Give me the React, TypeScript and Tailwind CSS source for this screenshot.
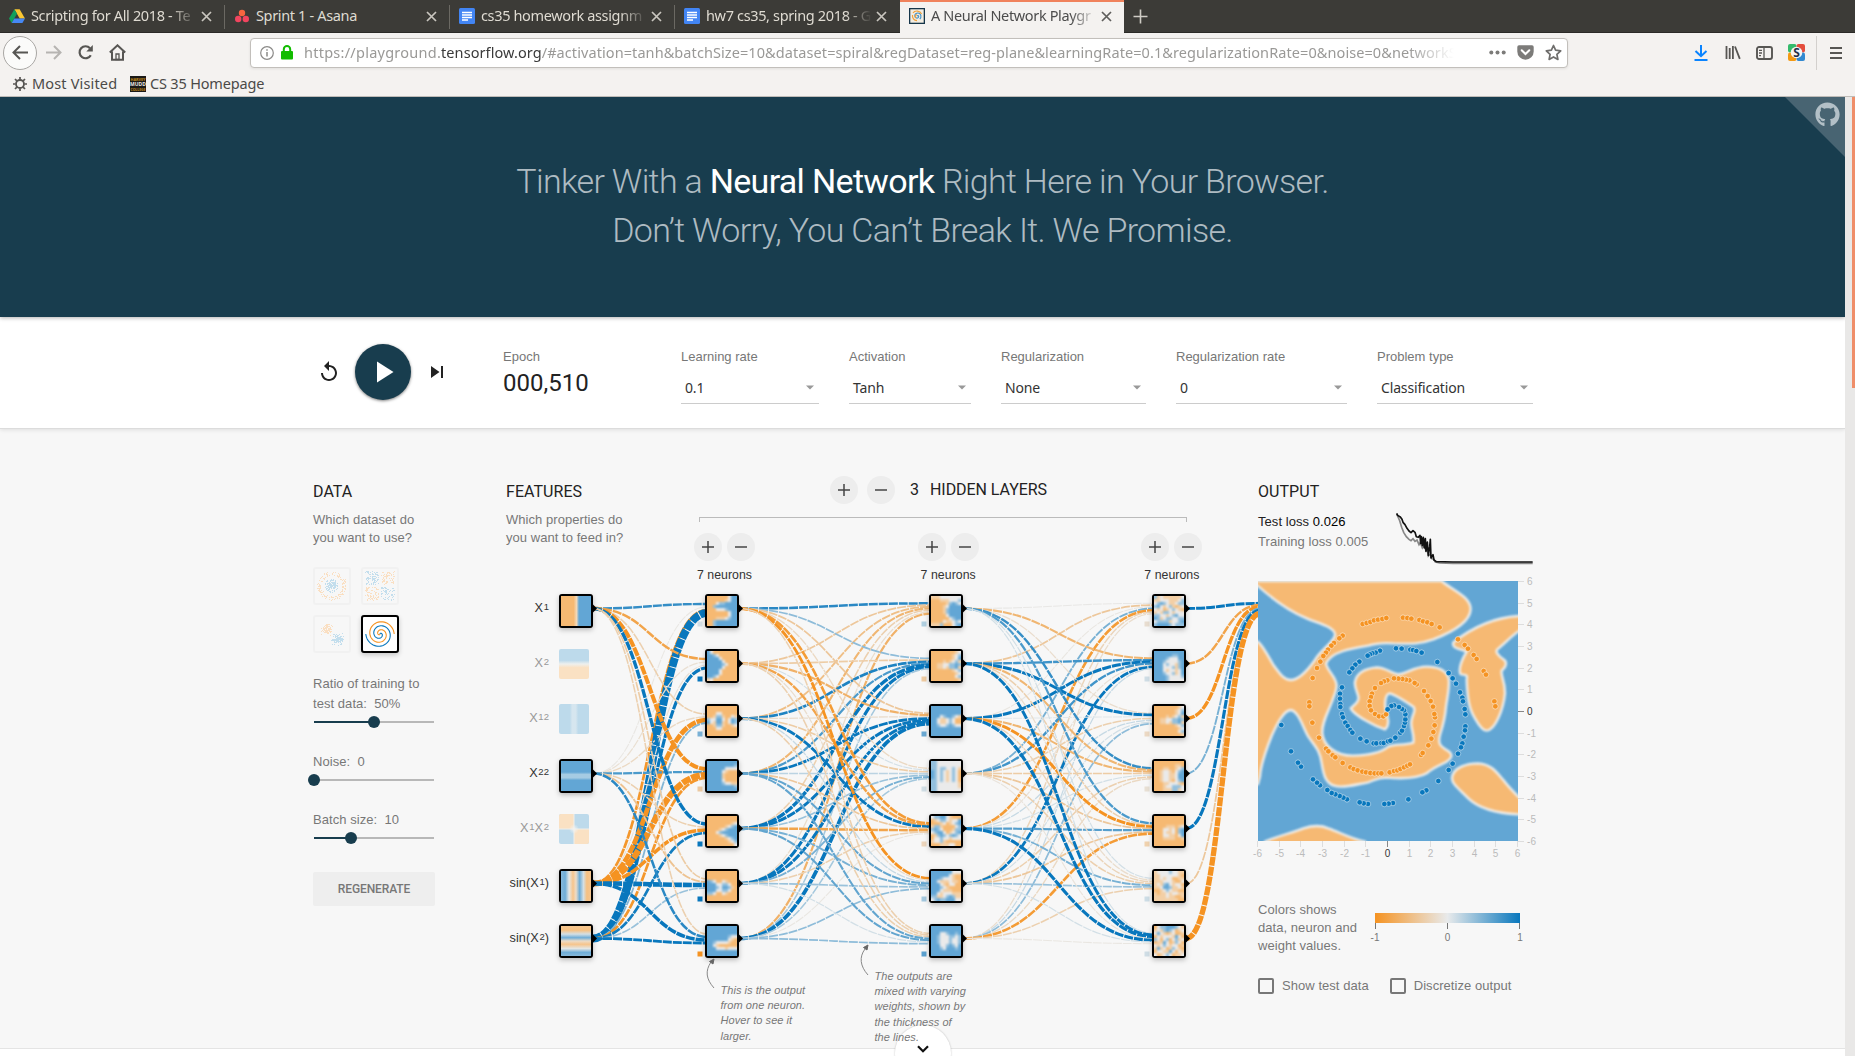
import React from "react";
import { FaGithub } from "react-icons/fa";

const NEG = "#f6b972";
const POS = "#62a6d5";

/* ---------- helpers ---------- */

function mix(a: number[], b: number[], t: number) {
  return `rgb(${a.map((v, i) => Math.round(v + (b[i] - v) * t)).join(",")})`;
}

function weightColor(w: number) {
  const t = Math.min(1, Math.abs(w));
  return mix([232, 234, 235], w < 0 ? [245, 147, 34] : [8, 119, 189], t);
}

function random(seed: number) {
  let s = seed;
  return () => {
    s = (s * 16807) % 2147483647;
    return s / 2147483647;
  };
}

/* ---------- browser chrome ---------- */

const TAB_MASK = "[mask-image:linear-gradient(to_right,black_84%,transparent)]";

function CloseX({ color }: { color: string }) {
  return (
    <svg width="11" height="11" viewBox="0 0 11 11" className="shrink-0">
      <path d="M1 1L10 10M10 1L1 10" stroke={color} strokeWidth="1.7" fill="none" />
    </svg>
  );
}

function DriveIcon() {
  return (
    <svg width="16" height="16" viewBox="0 0 16 16">
      <path d="M5.4 1.2h5.2L16 10.4h-5.3z" fill="#fbc732" />
      <path d="M5.4 1.2L0 10.4l2.7 4.5L8 5.7z" fill="#12a05c" />
      <path d="M5.3 10.4H16l-2.6 4.5H2.7z" fill="#4688f4" />
    </svg>
  );
}

function AsanaIcon() {
  return (
    <svg width="14" height="14" viewBox="0 0 14 14">
      <circle cx="7" cy="4" r="3.2" fill="#f8653f" />
      <circle cx="3.2" cy="10" r="3.2" fill="#f2455f" />
      <circle cx="10.8" cy="10" r="3.2" fill="#f2455f" />
    </svg>
  );
}

function DocsIcon() {
  return (
    <svg width="16" height="16" viewBox="0 0 16 16">
      <rect width="16" height="16" rx="1.5" fill="#4285f4" />
      <path d="M3 4.5h10M3 7h10M3 9.5h10M3 12h6" stroke="#fff" strokeWidth="1.3" />
    </svg>
  );
}

function PlaygroundIcon() {
  return (
    <svg width="16" height="16" viewBox="0 0 16 16">
      <rect x="0.5" y="0.5" width="15" height="15" fill="#f3ede2" stroke="#16364a" strokeWidth="1.6" />
      <path d="M8 8c1-1 2.200 0 1.500 1.300S6 10.500 5.800 8 8 4.500 10 5.200s2.800 4 .8 6" stroke="#3c8fc7" strokeWidth="1.100" fill="none" />
      <path d="M8 7c-1.500-.5-2.500 2-.8 2.600M4 5c2-3 7-2.500 8.600 1M3.500 7c-.5 3 1.500 5.500 4.500 5.600" stroke="#f0a13c" strokeWidth="1.200" fill="none" />
    </svg>
  );
}

const TABS = [
  { title: "Scripting for All 2018 - Te", icon: <DriveIcon />, fade: true },
  { title: "Sprint 1 - Asana", icon: <AsanaIcon />, fade: false },
  { title: "cs35 homework assignm", icon: <DocsIcon />, fade: true },
  { title: "hw7 cs35, spring 2018 - G", icon: <DocsIcon />, fade: true },
];

function TabBar() {
  return (
    <div className="flex h-[33px] items-stretch border-b border-[#2b2a27] bg-[#3c3b37] text-[14.5px] text-[#dfdbd2]">
      {TABS.map((t, i) => (
        <div key={t.title} className="relative flex w-[225px] items-center pl-[9px]">
          <div className="flex w-4 justify-center">{t.icon}</div>
          <div className={`ml-[6px] w-[166px] overflow-hidden whitespace-nowrap tracking-[-0.35px] ${t.fade ? TAB_MASK : ""}`}>
            {t.title}
          </div>
          <div className="ml-[4px]">
            <CloseX color="#c9c6bf" />
          </div>
          {i < 3 && <div className="absolute top-[5px] right-0 h-[24px] w-px bg-[#6b6963]" />}
        </div>
      ))}
      <div className="-mb-px flex w-[224px] items-center border-t-2 border-[#f0825c] bg-[#f4f2f0] pb-[3px] pl-[9px] text-[#4c4c4c]">
        <PlaygroundIcon />
        <div className={`ml-[6px] w-[166px] overflow-hidden whitespace-nowrap tracking-[-0.35px] ${TAB_MASK}`}>
          A Neural Network Playgr
        </div>
        <div className="ml-[4px]">
          <CloseX color="#5f5e5c" />
        </div>
      </div>
      <div className="flex items-center pl-[9px]">
        <svg width="15" height="15" viewBox="0 0 15 15">
          <path d="M7.500 .5v14M.5 7.500h14" stroke="#cfccc5" strokeWidth="1.600" />
        </svg>
      </div>
    </div>
  );
}

function NavBar() {
  return (
    <div className="flex h-[39px] items-center">
      <div className="ml-[3px] flex h-[34px] w-[34px] items-center justify-center rounded-full border border-[#a9a7a4] bg-[#fbfbfa]">
        <svg width="17" height="15" viewBox="0 0 17 15">
          <path d="M8 1L1.500 7.500 8 14M1.500 7.500H16" stroke="#575653" strokeWidth="2" fill="none" />
        </svg>
      </div>
      <svg className="ml-[8px]" width="17" height="15" viewBox="0 0 17 15">
        <path d="M9 1l6.500 6.500L9 14M15.500 7.500H1" stroke="#b6b4b1" strokeWidth="2" fill="none" />
      </svg>
      <svg className="ml-[15px]" width="17" height="17" viewBox="0 0 17 17">
        <path d="M13.800 11.200A6 6 0 1 1 13 4.200" stroke="#575653" strokeWidth="2.200" fill="none" />
        <path d="M15.800 1v6.500H9.300z" fill="#575653" />
      </svg>
      <svg className="ml-[15px]" width="17" height="17" viewBox="0 0 17 17">
        <path d="M.8 8.500L8.500 1.300l7.700 7.200M3 7.500v8.200h11V7.500" stroke="#575653" strokeWidth="2" fill="none" />
        <path d="M7 10h3v5.500H7z" stroke="#575653" strokeWidth="1.300" fill="none" />
      </svg>
      <div className="ml-[124px] flex h-[30px] w-[1318px] items-center rounded-[4px] border border-[#c2bfbb] bg-white shadow-[0_1px_3px_rgba(0,0,0,0.08)]">
        <svg className="ml-[9px]" width="14" height="14" viewBox="0 0 14 14">
          <circle cx="7" cy="7" r="6.300" fill="none" stroke="#8b8a88" strokeWidth="1.200" />
          <path d="M7 6v4.500M7 3.200v1.600" stroke="#8b8a88" strokeWidth="1.500" />
        </svg>
        <svg className="ml-[7px]" width="12" height="15" viewBox="0 0 12 15">
          <rect y="6" width="12" height="8.500" rx="1" fill="#12bc00" />
          <path d="M2.800 7V4.200a3.200 3.200 0 0 1 6.400 0V7" stroke="#12bc00" strokeWidth="2" fill="none" />
        </svg>
        <div className="ml-[11px] w-[1150px] overflow-hidden whitespace-nowrap pt-px text-[14.5px] tracking-[0.08px] text-[#9a9997] [mask-image:linear-gradient(to_right,black_96%,transparent)]">
          <span className="tracking-[0.25px]">https://playground.</span>
          <span className="text-[#3a3a3a]">tensorflow.org</span>
          /#activation=tanh&amp;batchSize=10&amp;dataset=spiral&amp;regDataset=reg-plane&amp;learningRate=0.1&amp;regularizationRate=0&amp;noise=0&amp;networkS
        </div>
        <svg className="ml-[35px]" width="17" height="5" viewBox="0 0 17 5">
          <circle cx="2.300" cy="2.500" r="2" fill="#7c7b79" />
          <circle cx="8.500" cy="2.500" r="2" fill="#7c7b79" />
          <circle cx="14.700" cy="2.500" r="2" fill="#7c7b79" />
        </svg>
        <svg className="ml-[11px]" width="17" height="15" viewBox="0 0 17 15">
          <path d="M2 .3h13A1.700 1.700 0 0 1 16.700 2v4.500a8.200 8.200 0 0 1-16.400 0V2A1.700 1.700 0 0 1 2 .3z" fill="#7c7b79" />
          <path d="M4.700 5.200L8.500 9l3.800-3.800" stroke="#fff" strokeWidth="2" fill="none" strokeLinecap="round" />
        </svg>
        <svg className="ml-[11px]" width="17" height="17" viewBox="0 0 17 17">
          <path d="M8.500 1.500l2.100 4.700 5.100.6-3.800 3.500 1 5.100-4.400-2.500-4.400 2.500 1-5.100L1.300 6.800l5.100-.6z" stroke="#6f6e6c" strokeWidth="1.700" fill="none" strokeLinejoin="round" />
        </svg>
      </div>
      <svg className="ml-[126px]" width="14" height="16" viewBox="0 0 14 16">
        <path d="M7 0v11M1.500 6L7 11.200 12.500 6M.5 15h13" stroke="#0a84ff" strokeWidth="2" fill="none" />
      </svg>
      <svg className="ml-[17px]" width="16" height="15" viewBox="0 0 16 15">
        <path d="M1.500 1v13M4.700 3v11M7.900 1v13M10 1.500l4.800 12.300" stroke="#575653" strokeWidth="1.800" fill="none" />
      </svg>
      <svg className="ml-[15px]" width="17" height="14" viewBox="0 0 17 14">
        <rect x="1" y="1" width="15" height="12" rx="2" stroke="#575653" strokeWidth="1.900" fill="none" />
        <path d="M8 1v12M3 4.300h3M3 7h3M3 9.700h2" stroke="#575653" strokeWidth="1.300" />
      </svg>
      <svg className="ml-[15px]" width="17" height="17" viewBox="0 0 17 17">
        <rect width="8.500" height="8.500" rx="2" fill="#35bb6c" />
        <rect x="8.500" width="8.500" height="8.500" rx="2" fill="#e44d3c" />
        <rect y="8.500" width="8.500" height="8.500" rx="2" fill="#f39a14" />
        <rect x="8.500" y="8.500" width="8.500" height="8.500" rx="2" fill="#3289d0" />
        <circle cx="8.500" cy="8.500" r="5.800" fill="#f4f4f4" />
        <text x="8.500" y="12.800" fontSize="12" fontWeight="700" textAnchor="middle" fill="#23304a">S</text>
      </svg>
      <div className="ml-[11px] h-[34px] w-px bg-[#d3d0cd]" />
      <svg className="ml-[13px]" width="12" height="14" viewBox="0 0 12 14">
        <path d="M0 2h13M0 7h13M0 12h13" stroke="#575653" strokeWidth="2" />
      </svg>
    </div>
  );
}

function Bookmarks() {
  return (
    <div className="flex h-[24px] items-center text-[14.5px] text-[#4b4a48]">
      <svg className="ml-[13px]" width="14" height="14" viewBox="0 0 14 14">
        <circle cx="7" cy="7" r="4" fill="none" stroke="#575653" strokeWidth="1.800" />
        <path d="M7 0v2.600M7 11.400V14M0 7h2.600M11.400 7H14M2 2l1.900 1.900M10.100 10.100L12 12M12 2l-1.900 1.900M3.900 10.100L2 12" stroke="#575653" strokeWidth="1.700" />
      </svg>
      <span className="ml-[5px] w-[86px] whitespace-nowrap tracking-[0.16px]">Most Visited</span>
      <svg className="ml-[12px]" width="16" height="16" viewBox="0 0 16 16">
        <rect width="16" height="16" fill="#1b1a18" />
        <text x="8" y="5" fontSize="3.800" fontWeight="700" textAnchor="middle" fill="#c58a1c">HARVEY</text>
        <text x="8" y="10.200" fontSize="5" fontWeight="700" textAnchor="middle" fill="#e8e6e2">MUDD</text>
        <text x="8" y="15" fontSize="3.400" fontWeight="700" textAnchor="middle" fill="#c58a1c">COLLEGE</text>
      </svg>
      <span className="ml-[4px] whitespace-nowrap tracking-[-0.18px]">CS 35 Homepage</span>
    </div>
  );
}

/* ---------- page header and controls ---------- */

function Hero() {
  return (
    <header className="relative z-10 flex h-[220px] flex-col items-center bg-[#183d4e] pt-[60px] shadow-[0_1px_4px_rgba(0,0,0,0.3)]">
      <h1 className="text-center font-['Roboto',sans-serif] text-[34px] leading-[49px] font-light tracking-[-0.68px] text-[#aebbc2]">
        Tinker With a <span className="font-normal text-white">Neural Network</span> Right Here in Your Browser.
        <br />
        Don’t Worry, You Can’t Break It. We Promise.
      </h1>
      <div className="absolute top-0 right-0 h-[60px] w-[60px] bg-[#486472] [clip-path:polygon(0_0,100%_0,100%_100%)]" />
      <FaGithub className="absolute top-[5px] right-[5px] text-[#b3c0c7]" size={25} />
    </header>
  );
}

const SELECTS = [
  { label: "Learning rate", value: "0.1", box: "w-[138px] mr-[30px]" },
  { label: "Activation", value: "Tanh", box: "w-[122px] mr-[30px]" },
  { label: "Regularization", value: "None", box: "w-[145px] mr-[30px]" },
  { label: "Regularization rate", value: "0", box: "w-[171px] mr-[30px]" },
  { label: "Problem type", value: "Classification", box: "w-[156px]" },
];

function Controls() {
  return (
    <div className="relative z-[1] flex h-[112px] border-b border-[#dcdcdc] bg-white shadow-[0_1px_4px_rgba(0,0,0,0.1)]">
      <div className="ml-[317px] flex h-[110px] w-[186px] items-center">
        <svg width="24" height="24" viewBox="0 0 24 24">
          <path d="M12 5V1L7 6l5 5V7c3.310 0 6 2.690 6 6s-2.690 6-6 6-6-2.690-6-6H4c0 4.420 3.580 8 8 8s8-3.580 8-8-3.580-8-8-8z" fill="#222" />
        </svg>
        <div className="ml-[14px] flex h-[56px] w-[56px] items-center justify-center rounded-full bg-[#183d4e] shadow-[0_1px_3px_rgba(0,0,0,0.5)]">
          <svg width="36" height="36" viewBox="0 0 24 24">
            <path d="M8 5v14l11-7z" fill="#fff" />
          </svg>
        </div>
        <svg className="ml-[14px]" width="24" height="24" viewBox="0 0 24 24">
          <path d="M6 18l8.500-6L6 6v12zM16 6v12h2V6h-2z" fill="#222" />
        </svg>
      </div>
      <div className="w-[178px] pt-[31px]">
        <div className="h-[18px] text-[13px] leading-[18px] text-[#777]">Epoch</div>
        <div className="mt-[3px] font-['Roboto',sans-serif] text-[24px] leading-[28px] text-[#222]">000,510</div>
      </div>
      {SELECTS.map((s) => (
        <div key={s.label} className={`${s.box} pt-[31px]`}>
          <div className="h-[18px] text-[13px] leading-[18px] whitespace-nowrap text-[#777]">{s.label}</div>
          <div className="mt-[7px] flex h-[31px] items-center justify-between border-b border-[#ccc] pr-[5px] pb-[2px] pl-[4px] font-['Noto_Sans',sans-serif] text-[14px] tracking-[-0.15px] text-[#333]">
            {s.value}
            <svg width="8" height="5" viewBox="0 0 8 5">
              <path d="M0 .5h8L4 4.500z" fill="#999" />
            </svg>
          </div>
        </div>
      ))}
    </div>
  );
}

/* ---------- data column ---------- */

function spiralPath(delta: number, size: number) {
  const pts: string[] = [];
  for (let i = 0; i <= 90; i++) {
    const r = (i / 90) * size;
    const t = ((1.75 * i) / 90) * 2 * Math.PI + delta;
    pts.push(`${(17 + r * Math.sin(t)).toFixed(2)},${(17 - r * Math.cos(t)).toFixed(2)}`);
  }
  return "M" + pts.join("L");
}

type Dot = { x: number; y: number; pos: boolean };

function circleDots(): Dot[] {
  const rnd = random(11);
  return Array.from({ length: 300 }, (_, i) => {
    const pos = i % 2 === 0;
    const a = rnd() * Math.PI * 2;
    const r = pos ? rnd() * 7 : 10.5 + rnd() * 4;
    return { x: 16.5 + r * Math.cos(a), y: 16.5 + r * Math.sin(a), pos };
  });
}

function xorDots(): Dot[] {
  const rnd = random(29);
  return Array.from({ length: 300 }, () => {
    const x = (rnd() - 0.5) * 27;
    const y = (rnd() - 0.5) * 27;
    return { x: 16.5 + x + Math.sign(x), y: 16.5 + y + Math.sign(y), pos: x * y > 0 };
  });
}

function gaussDots(): Dot[] {
  const rnd = random(53);
  return Array.from({ length: 220 }, (_, i) => {
    const pos = i % 2 === 0;
    const gx = (rnd() + rnd() + rnd() - 1.5) * 5;
    const gy = (rnd() + rnd() + rnd() - 1.5) * 5;
    return { x: (pos ? 22.5 : 11.500) + gx, y: (pos ? 22 : 12) + gy, pos };
  });
}

function DotThumb({ dots }: { dots: Dot[] }) {
  return (
    <div className="h-[38px] w-[38px] rounded-[3px] border-2 border-[#f1f1f1]">
      <svg width="34" height="34" viewBox="0 0 34 34">
        {dots.map((d, i) => (
          <rect key={i} x={Math.round(d.x)} y={Math.round(d.y)} width="1" height="1" fill={d.pos ? "#c3deed" : "#fadfc2"} />
        ))}
      </svg>
    </div>
  );
}

function Slider({ fill, knob }: { fill: string; knob: string }) {
  return (
    <div className="relative mt-[2px] flex h-[12px] w-[122px] items-center px-px">
      <div className="h-[2px] w-full bg-[#b8b8b8]">
        <div className={`h-[2px] bg-[#183d4e] ${fill}`} />
      </div>
      <div className={`absolute top-0 h-[12px] w-[12px] rounded-full bg-[#183d4e] ${knob}`} />
    </div>
  );
}

function DataColumn() {
  return (
    <div className="w-[193px] pt-[53px]">
      <h2 className="h-[20px] font-['Roboto',sans-serif] text-[16px] leading-[20px] text-[#222]">DATA</h2>
      <p className="mt-[9px] text-[13px] leading-[18px]">
        Which dataset do
        <br />
        you want to use?
      </p>
      <div className="mt-[20px] grid w-[86px] grid-cols-2 gap-[10px]">
        <DotThumb dots={circleDots()} />
        <DotThumb dots={xorDots()} />
        <DotThumb dots={gaussDots()} />
        <div className="h-[38px] w-[38px] rounded-[3px] border-2 border-black bg-white shadow-[0_2px_5px_rgba(0,0,0,0.2)]">
          <svg width="34" height="34" viewBox="0 0 34 34">
            <path d={spiralPath(0, 14.200)} stroke="#0877bd" strokeWidth="1.100" fill="none" />
            <path d={spiralPath(Math.PI, 14.200)} stroke="#f59322" strokeWidth="1.100" fill="none" />
          </svg>
        </div>
      </div>
      <p className="mt-[21px] text-[13px] leading-[20px]">
        Ratio of training to
        <br />
        test data:&nbsp; 50%
      </p>
      <Slider fill="w-1/2" knob="left-[55px]" />
      <p className="mt-[24px] text-[13px] leading-[20px]">Noise:&nbsp; 0</p>
      <Slider fill="w-0" knob="left-[-5px]" />
      <p className="mt-[24px] text-[13px] leading-[20px]">Batch size:&nbsp; 10</p>
      <Slider fill="w-[31%]" knob="left-[32px]" />
      <div className="mt-[28px] flex h-[34px] w-[122px] items-center justify-center rounded-[2px] bg-[#eee] font-['Roboto',sans-serif] text-[12px] font-medium tracking-[-0.1px] text-[#777]">
        REGENERATE
      </div>
    </div>
  );
}

/* ---------- hidden layer controls ---------- */

function RoundButton({ minus }: { minus?: boolean }) {
  return (
    <div className="flex h-[28px] w-[28px] items-center justify-center rounded-full bg-[#ededed]">
      <svg width="12" height="12" viewBox="0 0 12 12">
        <path d={minus ? "M0 6h12" : "M0 6h12M6 0v12"} stroke="#444" strokeWidth="1.500" />
      </svg>
    </div>
  );
}

function HiddenColumn() {
  return (
    <div className="w-[565px] pt-[47px]">
      <div className="ml-[137px] flex items-center">
        <RoundButton />
        <div className="ml-[9px]">
          <RoundButton minus />
        </div>
        <div className="ml-[15px] w-[20px] font-['Roboto',sans-serif] text-[16px] text-[#222]">3</div>
        <div className="font-['Roboto',sans-serif] text-[16px] tracking-[-0.06px] whitespace-nowrap text-[#222]">HIDDEN LAYERS</div>
      </div>
      <div className="mt-[13px] ml-[6px] h-[5px] w-[488px] border-x border-t border-[#bbb]" />
      <div className="mt-[11px] ml-px flex">
        {[0, 1, 2].map((k) => (
          <div key={k} className={k < 2 ? "w-[223.700px]" : ""}>
            <div className="flex gap-[5px]">
              <RoundButton />
              <RoundButton minus />
            </div>
            <div className="mt-[5px] w-[61px] text-center text-[12.300px] leading-[18px] whitespace-nowrap text-[#333]">7 neurons</div>
          </div>
        ))}
      </div>
    </div>
  );
}

/* ---------- network diagram ---------- */

const ROW0 = 608.500;
const ROW = 55;
const IN_X = 576;
const HID_X = [722, 946, 1169];
const ACTIVE = [0, 3, 5, 6];

const W0 = [
  [0.8, -0.8, -0.3, -1.7, 1.3, -0.35, -0.3],
  [-0.04, -0.12, -0.2, 0.7, -0.3, -0.45, 0.85],
  [-0.95, -0.1, -2.1, -2.9, -1.4, 2.0, 1.4],
  [3.8, 1.2, 0.45, -0.95, 0.95, 0.35, 1.0],
];

const W1 = [
  [0.85, 0.4, -0.4, -0.2, -0.9, -1.0, -0.3],
  [-0.4, -0.35, -0.65, 0.1, -0.8, -0.15, -0.3],
  [-0.5, 0.9, -0.15, -0.35, 1.0, 0.15, -0.3],
  [-0.6, 0.7, 1.0, 0.2, -0.4, 0.6, 0.6],
  [-0.3, 1.3, 1.1, 0.35, -0.8, 0.5, 0.6],
  [-0.15, 1.2, 1.1, 0.5, -0.3, 0.35, 0.1],
  [-0.65, 0.3, 1.5, 0.3, -0.05, 0.4, 0.4],
];

const W2 = [
  [-0.03, -0.6, -0.15, 0.8, 0.7, 0.1, 0.1],
  [-0.4, 0.75, 1.1, -0.6, -0.3, -0.15, 1.1],
  [-0.05, 1.1, 0.03, -0.6, -1.1, -0.25, 1.2],
  [0.5, 0.75, -0.3, -0.35, -0.4, -0.3, -0.08],
  [-0.9, -0.1, 0.15, 0.1, 0.65, 0.5, 1.2],
  [-0.25, 1.0, 0.1, -0.3, -0.4, 0.35, 0.1],
  [-0.15, 0.15, 0.4, -0.2, -0.9, -0.3, -0.05],
];

const W3 = [1.1, -0.8, -1.3, 0.5, 1.2, -0.4, -2.4];

function Link({ x1, y1, x2, y2, w }: { x1: number; y1: number; x2: number; y2: number; w: number }) {
  const m = (x1 + x2) / 2;
  return (
    <path
      d={`M${x1},${y1}C${m},${y1} ${m},${y2} ${x2},${y2}`}
      fill="none"
      stroke={weightColor(w)}
      strokeWidth={1 + (9 * Math.min(5, Math.abs(w))) / 5}
      strokeDasharray="9 1"
    />
  );
}

function layerLinks(key: string, weights: number[][], rows: number[], xs: number, xt: number) {
  const n = weights.length;
  const out: React.ReactNode[] = [];
  for (let t = 0; t < 7; t++) {
    for (let s = 0; s < n; s++) {
      out.push(
        <Link
          key={`${key}-${t}-${s}`}
          x1={xs + 17}
          y1={ROW0 + rows[s] * ROW}
          x2={xt - 15}
          y2={ROW0 + t * ROW + ((s - (n - 1) / 2) / n) * 12}
          w={weights[s][t]}
        />,
      );
    }
  }
  return out;
}

const SHADE: Record<string, string> = { O: NEG, o: "#f3cfa5", w: "#eaeaea", b: "#93c0de", B: POS };
const ORANGE = "OOOOOOOOOO";
const BLUE = "BBBBBBBBBB";
const BRANCH = ["OOOOOOOOow", "OOOOOOOowb", "OOOOOOOowB", "OOOOoOowbo", "OOoowwbbBb", "OOoowobbBo", "OOOOOOOowb", "OOOOOOOOow", "OOOOOOOOwb", "OOOOOOOOOo"];

const MAPS: string[][][] = [
  [
    ["OOOOOOOwBB", "OOOOOOowBB", "OOOwbbBBBB", "OObBBBBBBB", "OOOwwwbBBB", "OOOOOOOwBB", "OOOOOOOwBB", "OOOooowbBB", "OObBBBBBBB", "OObBBBBBBB"],
    ["BwOOOOOOOO", "BBbwOOOOOO", "BBBBwOOOOO", "BBBBBwOOOO", "BBBBBbwOOO", "BBBBBwOOOO", "BBBBwOOOOO", "BBBBwOOOOO", "BBbwOOOOOO", "owOOOOOOOO"],
    [ORANGE, ORANGE, "OOOwwOOOOO", "OOobboOOwo", "bwwBBwOwBb", "BwoBBoOwBb", "OOobboOOow", "OOOwwOOOOO", ORANGE, ORANGE],
    [BLUE, "BBBBBBBBBb", "BBBBBBwwww", "BBBBBwoOOO", "BBBBBoOOOO", "BBBBBoOOOO", "BBBBBwOOOO", "BBBBBbwwoo", "BBBBBBBBBb", BLUE],
    [ORANGE, ORANGE, "OOOOOOOOow", "OOOOOOowbB", "OOOOowbBBB", "OOOwbBBBBB", "OOOOowbBBB", "OOOOOOowbB", "OOOOOOOowb", "OOOOOOOOOw"],
    [ORANGE, ORANGE, ORANGE, "BbwOOwoOOO", "BBBwwbbwOO", "BBBbwBBboO", "BBBwwbbwOO", "bbwOOwoOOO", ORANGE, ORANGE],
    [BLUE, BLUE, BLUE, "BBBBBBBbww", "BBBBBBBwoO", "BBbwwwwoOO", "BBwoOOOOOO", "BBBwwwowww", BLUE, BLUE],
  ],
  [
    ["ooowwwwwww", "OOOooowwwb", "OOOOOobBbw", "OOOOowBBBB", "OOOOobBBBB", "OOOOobBBBB", "OOOOOwBBBB", "OOOOOOwbBB", "OOOOwoowbw", "ooobOOOwbB"],
    BRANCH,
    [BLUE, "BBBBBBBBBB", "BBBBBBBBBB", "BBBwbBBbwo", "BBwoowbwOO", "BBwoowbwOO", "BBbwwbBbww", BLUE, "BBBBBBBBBB", BLUE],
    ["bbwwwwwwww", "bbwwwwwwww", "bbwbbwwbwo", "BbwbwowbwO", "BbwbwowbwO", "BbwbwowbwO", "bbwbwowbwO", "bbwwwwwwwo", "bbwwwwwwwo", "bbwwwwwwww"],
    ["wbbBBwoOOO", "OowbbwowwB", "OOOowOowbB", "obboOOOOwb", "bBbwOOOobb", "wbBBwOowbB", "OobBbwbBbw", "Owwbwwowww", "owwboOOOOO", "OOOooowwOO"],
    ["BBBBBBBwww", "BBBBBBwoOO", "BBBbwwwoOO", "BBwooowooO", "BBBwoOwwOO", "BBBbwoOOOO", "BBBwoooOOO", "BBwowwwooo", "bboowbBboo", "wbBbbBBBww"],
    [BLUE, "BBBBBBBBBB", "BBBwwbBBbB", "BBbwwwbbwb", "BBbwwwbwwb", "BBbwwwbwwb", "BBBwwbBbwB", "BBBbwBBBbB", BLUE, BLUE],
  ],
  [
    ["bowoooooow", "oowwwooowb", "wbBbwoowbb", "bBwowboOow", "wowOowbwoO", "owobbwowww", "bbwwowbBww", "Bbowbbwwbb", "wbbbbowwbB", "bBBBBbwbbb"],
    [BLUE, "BBBBBBbbBB", "BBBBbwwwBB", "BBBbwwwwbB", "BBBwbwwobB", "BBBwwwbobB", "BBBwowwowB", "BBBbwwbowB", "BBBBbwwwwb", "BBBBbwwwww"],
    BRANCH,
    [ORANGE, "OOOOOOOooO", "OOOooOOowb", "OOowwoOwbB", "OOowwoowBB", "OOowwoowBB", "OOowwoOwbB", "OOOoowwwoO", "OOOowwbbbw", "OOOooobbow"],
    [ORANGE, ORANGE, ORANGE, "OOOOoooOow", "OOOwwowObB", "OOOwoowObB", "OOOwwooOwB", "OOOooooOOo", ORANGE, ORANGE],
    ["owwwwbwwoo", "oowwwwwwoO", "oowowwOOoo", "ooowwwoOOw", "owobBwowwO", "oowBBboowo", "OOowbwooOO", "oOoowowwoo", "oooowooOOo", "ooooooooOO"],
    ["OwbbBBBbwo", "owobBbwOow", "wBwoOowOOo", "OwowwwoBwO", "bwOwbOwbow", "OooBwOobwO", "wowbwowwOo", "oBowOobwoO", "OwwooBwOwo", "wOowbwOoow"],
  ],
];

const BIASES = [
  ["#d4dfe6", "#0877bd", "#7ab1d6", "#ecc9a1", "#0877bd", "#0877bd", "#f59322"],
  ["#b0cfe0", "#eecaa0", "#6aa8d2", "#d0dde4", "#ecd5bc", "#a4c8de", "#5aa0cf"],
  ["#e8ddd0", "#cfdde5", "#ecd9c4", "#e8e0d4", "#f0d2ae", "#cddde6", "#cfdde5"],
];

function NodeFrame({ cx, cy, children }: { cx: number; cy: number; children: React.ReactNode }) {
  const x = cx - 17;
  const y = cy - 14.500;
  return (
    <g>
      <path d={`M${cx + 16},${cy - 5}l5,5l-5,5z`} fill="#000" />
      <rect x={x} y={y} width="34" height="34" rx="3" fill="#000" filter="url(#nodeShadow)" />
      <svg x={x + 2} y={y + 2} width="30" height="30" viewBox="0 0 30 30">
        {children}
      </svg>
    </g>
  );
}

function NeuronMap({ rows }: { rows: string[] }) {
  return (
    <g>
      <rect width="30" height="30" fill={SHADE[rows[5][5]]} />
      <g filter="url(#mapBlur)">
        {rows.map((row, r) =>
          row.split("").map((c, k) => {
            const x = k === 0 ? -4 : k * 3;
            const y = r === 0 ? -4 : r * 3;
            const w = k === 0 || k === 9 ? 7.100 : 3.100;
            const h = r === 0 || r === 9 ? 7.100 : 3.100;
            return <rect key={`${r}-${k}`} x={x} y={y} width={w} height={h} fill={SHADE[c]} />;
          }),
        )}
      </g>
    </g>
  );
}

function Stops({ list }: { list: [number, string][] }) {
  return (
    <>
      {list.map(([o, c], i) => (
        <stop key={i} offset={`${o}%`} stopColor={c} />
      ))}
    </>
  );
}

const FEATURE_LABELS: { row: number; parts: [string, boolean][] }[] = [
  { row: 0, parts: [["X", false], ["1", true]] },
  { row: 1, parts: [["X", false], ["2", true]] },
  { row: 2, parts: [["X", false], ["12", true]] },
  { row: 3, parts: [["X", false], ["22", true]] },
  { row: 4, parts: [["X", false], ["1", true], ["X", false], ["2", true]] },
  { row: 5, parts: [["sin(X", false], ["1", true], [")", false]] },
  { row: 6, parts: [["sin(X", false], ["2", true], [")", false]] },
];

function Callout({ x, y, lines }: { x: number; y: number; lines: string[] }) {
  return (
    <text fontSize="11" fontStyle="italic" fill="#777">
      {lines.map((l, i) => (
        <tspan key={l} x={x} y={y + i * 15.200}>
          {l}
        </tspan>
      ))}
    </text>
  );
}

function Network() {
  return (
    <svg className="absolute top-0 left-0" width="1845" height="620" viewBox="0 429 1845 620">
      <defs>
        <filter id="mapBlur" x="-20%" y="-20%" width="140%" height="140%" colorInterpolationFilters="sRGB">
          <feGaussianBlur stdDeviation="0.9" />
        </filter>
        <filter id="nodeShadow" x="-30%" y="-30%" width="160%" height="170%">
          <feDropShadow dx="0" dy="2" stdDeviation="2.500" floodOpacity="0.25" />
        </filter>
        <linearGradient id="gX1">
          <Stops list={[[42, NEG], [52, "#f3d9b9"], [60, POS]]} />
        </linearGradient>
        <linearGradient id="gX2" x2="0" y2="1">
          <Stops list={[[38, "#bddaeb"], [50, "#eef0ee"], [62, "#fae1c3"]]} />
        </linearGradient>
        <linearGradient id="gX1sq">
          <Stops list={[[36, "#bddaeb"], [44, "#d6e6ef"], [56, "#d6e6ef"], [64, "#bddaeb"]]} />
        </linearGradient>
        <linearGradient id="gX2sq" x2="0" y2="1">
          <Stops list={[[37, POS], [45, "#a5cbe3"], [56, "#a5cbe3"], [64, POS]]} />
        </linearGradient>
        <linearGradient id="gS1">
          <Stops list={[[0, "#86b8da"], [14, "#6fadd7"], [27, "#e4e6e4"], [40, "#f6c48b"], [50, "#ecdcc8"], [62, "#6fadd7"], [75, "#d4dfe4"], [86, "#f6c081"], [100, "#f5c690"]]} />
        </linearGradient>
        <linearGradient id="gS2" x2="0" y2="1">
          <Stops list={[[0, "#f5c690"], [14, "#f6c081"], [27, "#d4dfe4"], [39, "#6fadd7"], [50, "#ecdcc8"], [61, "#f6c48b"], [75, "#e4e6e4"], [88, "#6fadd7"], [100, "#86b8da"]]} />
        </linearGradient>
        <radialGradient id="gDot">
          <Stops list={[[0, "#f2f2f0"], [100, "rgba(242,242,240,0)"]]} />
        </radialGradient>
      </defs>

      {layerLinks("a", W0, ACTIVE, IN_X, HID_X[0])}
      {layerLinks("b", W1, [0, 1, 2, 3, 4, 5, 6], HID_X[0], HID_X[1])}
      {layerLinks("c", W2, [0, 1, 2, 3, 4, 5, 6], HID_X[1], HID_X[2])}
      {W3.map((w, s) => (
        <Link key={s} x1={HID_X[2] + 17} y1={ROW0 + s * ROW} x2={1260} y2={ROW0 + ((s - 3) / 7) * 12} w={w} />
      ))}

      {FEATURE_LABELS.map(({ row, parts }) => (
        <text key={row} x="549" y={ROW0 + row * ROW + 3} fontSize="12.700" textAnchor="end" fill={ACTIVE.includes(row) ? "#333" : "#999"}>
          {parts.map(([s, small], i) => (
            <tspan key={i} fontSize={small ? 9.500 : 12.700} dy={small ? -1.500 : i > 0 ? 1.500 : 0} dx={small ? 0.6 : 0}>
              {s}
            </tspan>
          ))}
        </text>
      ))}

      {ACTIVE.map((row, i) => (
        <NodeFrame key={row} cx={IN_X} cy={ROW0 + row * ROW}>
          <rect width="30" height="30" fill={["url(#gX1)", "url(#gX2sq)", "url(#gS1)", "url(#gS2)"][i]} />
        </NodeFrame>
      ))}
      <rect x="559" y="649" width="30" height="30" rx="2" fill="url(#gX2)" />
      <rect x="559" y="704" width="30" height="30" rx="2" fill="url(#gX1sq)" />
      <g>
        <rect x="559" y="814" width="30" height="30" rx="2" fill="#bddaeb" />
        <path d="M559 829v-13q0-2 2-2h13v15zM574 829h15v13q0 2-2 2h-13z" fill="#fae1c3" />
        <path d="M559 829h30M574 814v30" stroke="#f0eeea" strokeWidth="1.500" opacity="0.7" />
        <circle cx="574" cy="829" r="5" fill="url(#gDot)" />
      </g>

      {MAPS.map((col, k) =>
        col.map((rows, r) => (
          <g key={`${k}-${r}`}>
            <rect x={HID_X[k] - 24.500} y={ROW0 + r * ROW + 13} width="5" height="5" fill={BIASES[k][r]} />
            <NodeFrame cx={HID_X[k]} cy={ROW0 + r * ROW}>
              <NeuronMap rows={rows} />
            </NodeFrame>
          </g>
        )),
      )}

      <g stroke="#888" fill="none">
        <path d="M714,988C706,979 705,971 711,962" />
        <path d="M868,975C860,966 859,957 865,949" />
      </g>
      <path d="M714,959l-1,5l-3.500,-2.500z" fill="#666" stroke="#666" />
      <path d="M868,945l-1,5l-3.500,-2.500z" fill="#666" stroke="#666" />
      <Callout x={720.500} y={994} lines={["This is the output", "from one neuron.", "Hover to see it", "larger."]} />
    </svg>
  );
}

/* ---------- output column ---------- */

const REGIONS = [
  "M30,303L605,303C640,333 692,350 692,388C690,425 640,455 580,478C540,492 520,492 460,490C430,488 405,490 385,497C330,506 275,515 258,550C262,575 290,590 290,618C288,640 280,650 276,665C262,700 245,730 247,760C250,795 285,828 340,827C400,826 430,812 445,800C465,790 490,798 520,788C525,760 508,740 515,720C518,700 530,690 520,680C495,665 475,648 450,640C437,640 433,665 437,690C445,715 450,735 435,748C410,740 395,732 380,723C360,712 340,700 332,685C345,672 358,665 355,650C352,635 342,620 345,605C350,580 370,566 410,562C440,562 450,580 475,583C500,582 520,560 560,560C600,560 618,572 626,595C630,620 622,650 618,680C616,710 608,740 600,765C592,795 605,800 620,810C640,822 638,832 620,845C595,858 575,865 560,880C530,898 480,896 440,893C410,893 405,900 385,907C350,913 310,925 285,918C255,910 250,880 245,850C240,810 225,800 205,770C190,745 175,692 152,690C130,692 110,735 96,765C80,805 62,850 60,890L54,912L30,912L30,485L54,485C70,500 80,520 100,555C118,578 130,600 152,600C175,600 200,575 225,540C235,515 290,480 285,462C280,440 240,432 200,415C140,390 90,350 54,318Z",
  "M860,405L834,408C770,412 700,440 640,487C635,505 655,505 680,515C665,540 655,565 661,582C675,588 684,578 680,600C682,650 686,685 705,715C720,742 730,752 740,752C765,750 790,690 795,640C795,600 782,590 785,572C800,560 802,545 790,538C775,528 765,515 772,508C795,490 810,472 834,455L860,440Z",
  "M636,893C640,862 680,850 715,850C755,852 772,880 790,900C805,920 820,935 834,949L860,970L860,1006L834,1003C770,1000 720,988 685,955C655,925 634,910 636,893Z",
  "M75,1085C110,1068 160,1058 190,1045C215,1037 245,1036 265,1045C300,1057 330,1075 375,1085L375,1110L75,1110Z",
];

const ORANGE_DOTS =
  "368,432 380,429 391,426 402,421 414,419 427,417 439,414 489,413 502,414 514,416 538,420 549,424 562,427 575,432 599,442 654,478 674,495 684,506 701,525 710,537 731,573 738,584 763,664 766,679 308,467 298,475 282,489 274,497 264,509 258,518 250,528 241,545 231,564 218,594 208,667 208,679 217,728 237,773 258,806 265,814 278,826 286,832 308,849 331,862 341,867 353,871 367,875 378,877 391,879 404,880 415,880 424,880 449,877 462,873 472,871 481,867 492,862 502,857 510,853 543,825 548,819 565,796 574,776 580,756 584,736 585,712 583,702 579,680 572,663 563,648 552,633 530,613 524,609 508,601 498,599 487,597 475,596 462,595 442,601 432,604 423,609 405,624 396,641 393,651 389,664 389,678 393,691 405,702 417,709 430,709 438,703";
const BLUE_DOTS =
  "468,505 485,506 511,509 519,510 529,513 545,518 592,546 420,512 407,518 397,520 390,523 383,527 358,545 346,554 337,565 328,577 306,622 300,641 300,656 301,672 301,681 306,702 309,712 316,728 323,738 331,750 337,758 361,776 380,784 401,790 409,790 424,789 431,789 444,784 451,782 466,773 481,758 486,752 492,738 495,728 496,718 496,703 492,691 486,687 477,681 462,676 454,678 443,688 626,579 638,595 648,611 660,637 667,653 669,664 674,687 676,703 676,739 675,751 671,770 667,790 663,802 654,821 638,851 626,870 595,903 559,931 547,937 505,958 459,969 446,971 433,972 384,972 371,970 359,967 321,958 310,953 299,948 286,943 275,939 262,930 240,916 231,908 219,898 183,860 174,848 153,814 124,735";

const TICKS = [-6, -5, -4, -3, -2, -1, 0, 1, 2, 3, 4, 5, 6];

function Heatmap() {
  return (
    <svg className="-mt-[10px] -ml-[10px] block" width="300" height="300" viewBox="-10 -10 300 300">
      <defs>
        <clipPath id="plot">
          <rect width="260" height="260" />
        </clipPath>
        <filter id="edge" x="-5%" y="-5%" width="110%" height="110%" colorInterpolationFilters="sRGB">
          <feGaussianBlur stdDeviation="2.600" />
        </filter>
      </defs>
      <g clipPath="url(#plot)">
        <rect width="260" height="260" fill="#62a6d4" />
        <g transform="scale(0.33333) translate(-54 -303)">
          <g filter="url(#edge)">
            {REGIONS.map((d) => (
              <path key={d} d={d} fill="#f6b973" stroke="#f0f0ee" strokeWidth="7" />
            ))}
          </g>
          {[ORANGE_DOTS, BLUE_DOTS].map((dots, k) =>
            dots.split(" ").map((p) => {
              const [x, y] = p.split(",");
              return (
                <circle key={p} cx={x} cy={y} r="8.300" fill={k ? "#0877bd" : "#f59322"} stroke="#fff" strokeOpacity="0.6" strokeWidth="2.400" />
              );
            }),
          )}
        </g>
      </g>
      {TICKS.map((t) => {
        const p = Math.round(((t + 6) / 12) * 260) - 0.5;
        const q = Math.round(((6 - t) / 12) * 260) + 0.5;
        const ink = t === 0 ? "#333" : "#bbb";
        const line = t === 0 ? "#888" : "#ddd";
        return (
          <g key={t} fontSize="10" fill={ink}>
            <path d={`M${p},260v6M260,${q}h6`} stroke={line} />
            <text x={p} y="275.500" textAnchor="middle">{t}</text>
            <text x="269" y={q + 3}>{t}</text>
          </g>
        );
      })}
    </svg>
  );
}

function LossChart() {
  return (
    <svg width="140" height="54" viewBox="466 96 420 162">
      <path
        d="M471,102L480,122L486,142L492,157L500,170L508,178L514,182L520,176L526,184L532,180L538,194L542,188L548,204L553,196L558,210L562,204L566,228L572,222L576,236L582,238L587,246L600,249L640,250L879,250"
        stroke="#888" strokeWidth="5" fill="none"
      />
      <path
        d="M471,100L474,106L482,111L487,118L490,127L496,134L502,145L508,153L514,158L520,152L526,157L530,170L536,172L541,166L543,190L545,170L548,196L551,172L554,204L557,176L559,214L563,186L566,226L570,200L572,178L574,234L580,224L583,240L590,245L640,246L879,246"
        stroke="#111" strokeWidth="5" fill="none" strokeLinejoin="round"
      />
    </svg>
  );
}

function Check({ label }: { label: string }) {
  return (
    <div className="flex items-center">
      <div className="h-[16px] w-[16px] rounded-[2px] border-2 border-[#777]" />
      <span className="ml-[8px] text-[13px] leading-[18px] whitespace-nowrap">{label}</span>
    </div>
  );
}

function OutputColumn() {
  return (
    <div className="relative z-[1] w-[300px] pt-[53px]">
      <h2 className="h-[20px] font-['Roboto',sans-serif] text-[16px] leading-[20px] text-[#222]">OUTPUT</h2>
      <div className="flex h-[79px]">
        <div className="w-[137px] pt-[10px] text-[13px] leading-[20px] whitespace-nowrap">
          <div className="text-[#222]">
            Test loss <span className="text-black">0.026</span>
          </div>
          <div>Training loss 0.005</div>
        </div>
        <div className="pt-[10px]">
          <LossChart />
        </div>
      </div>
      <Heatmap />
      <div className="mt-[30px] flex">
        <p className="w-[110px] text-[13px] leading-[18px] whitespace-nowrap">
          Colors shows
          <br />
          data, neuron and
          <br />
          weight values.
        </p>
        <div className="w-[160px] pt-[12px] pl-[7px]">
          <div className="h-[10px] w-[145px] bg-[linear-gradient(to_right,#f59322,#e8eaeb,#0877bd)]" />
          <div className="flex h-[6px] w-[145px] justify-between">
            <div className="w-px bg-[#777]" />
            <div className="w-px bg-[#777]" />
            <div className="w-px bg-[#777]" />
          </div>
          <div className="-ml-[8px] flex w-[161px] justify-between text-[10px] leading-[18px]">
            <span className="w-[16px] text-center">-1</span>
            <span className="w-[16px] text-center">0</span>
            <span className="w-[16px] text-center">1</span>
          </div>
        </div>
      </div>
      <div className="mt-[22px] flex gap-[21px]">
        <Check label="Show test data" />
        <Check label="Discretize output" />
      </div>
    </div>
  );
}

/* ---------- page ---------- */

function Playground() {
  return (
    <main className="relative flex h-[620px] border-b border-[#e4e4e4] bg-[#f7f7f7] pl-[313px] tracking-[0.05px] text-[#777]">
      <DataColumn />
      <div className="w-[187px] pt-[53px]">
        <h2 className="h-[20px] font-['Roboto',sans-serif] text-[16px] leading-[20px] text-[#222]">FEATURES</h2>
        <p className="mt-[9px] text-[13px] leading-[18px] whitespace-nowrap">
          Which properties do
          <br />
          you want to feed in?
        </p>
      </div>
      <HiddenColumn />
      <Network />
      <OutputColumn />
      <div className="absolute top-[596px] left-[895px] z-[2] flex h-[56px] w-[56px] justify-center rounded-full bg-white pt-[20px] shadow-[0_0_2px_rgba(0,0,0,0.25)]">
        <svg width="12" height="8" viewBox="0 0 12 8">
          <path d="M1 1.200l5 5 5-5" stroke="#111" strokeWidth="2.200" fill="none" />
        </svg>
      </div>
      <svg className="absolute top-[539px] left-[870px] z-[3]" width="120" height="81" viewBox="870 968 120 81">
        <Callout x={874.500} y={980} lines={["The outputs are", "mixed with varying", "weights, shown by", "the thickness of", "the lines."]} />
      </svg>
    </main>
  );
}

export default function App() {
  return (
    <div className="flex h-[1056px] w-[1855px] flex-col overflow-hidden bg-white">
      <div className="h-[97px] border-b border-[#bfbcb8] bg-[#f4f2f0] font-['Noto_Sans',sans-serif]">
        <TabBar />
        <NavBar />
        <Bookmarks />
      </div>
      <div className="flex h-[959px]">
        <div className="w-[1845px] overflow-hidden font-['Liberation_Sans',sans-serif]">
          <Hero />
          <Controls />
          <Playground />
        </div>
        <div className="flex w-[10px] justify-end bg-[#e9e8e7]">
          <div className="h-[291px] w-[3px] bg-[#ef8e69]" />
        </div>
      </div>
    </div>
  );
}
